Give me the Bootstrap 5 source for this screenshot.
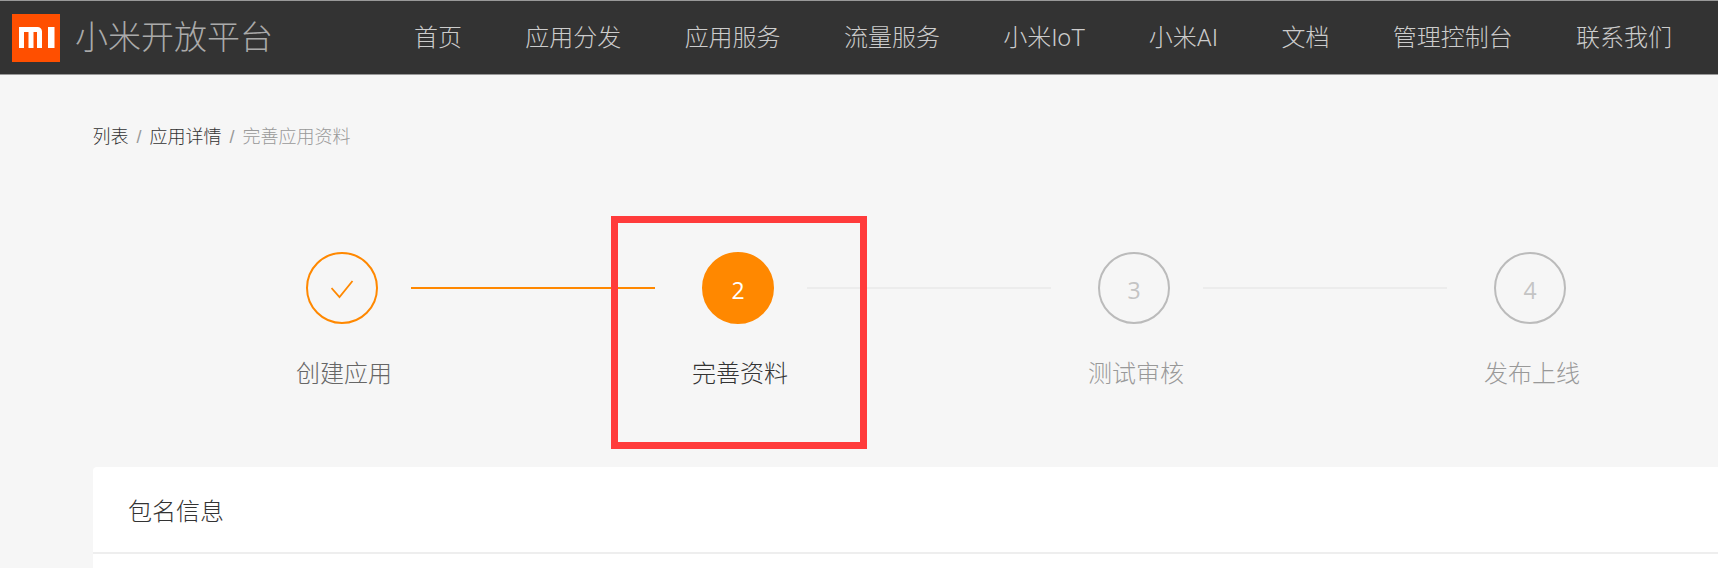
<!DOCTYPE html>
<html lang="zh-CN">
<head>
<meta charset="utf-8">
<title>小米开放平台</title>
<link rel="stylesheet" href="https://cdn.jsdelivr.net/npm/bootstrap@5.3.0/dist/css/bootstrap.min.css">
<style>
html,body{height:568px;overflow:hidden}
body{background:#f6f6f6;font-family:"Liberation Sans","Noto Sans CJK SC",sans-serif;font-weight:300;color:#333}
.mi-top{height:75px;background:#333;border-top:1px solid #999;border-bottom:1px solid #999;padding:0 46px 0 12px}
.mi-logo{width:48px;height:48px;background:#ff4f00;flex:none}
.mi-logo svg{margin-left:2px}
.mi-brand{font-size:33px;color:#aaa;margin-left:15px;line-height:1;white-space:nowrap}
.mi-links{gap:63.3px;font-size:24px;font-family:Roboto,"Noto Sans CJK SC",sans-serif}
.mi-links a{color:#ccc;text-decoration:none;white-space:nowrap}
.mi-crumb{padding:50px 0 0 92.5px;font-size:18px;line-height:24px;height:123px}
.mi-crumb a{color:#333;text-decoration:none}
.mi-crumb .sep{color:#999;margin:0 8px}
.mi-crumb .cur{color:#999}
.mi-steps{margin-left:243px;height:269px;padding-top:1px}
.mi-step{width:198px;flex:none;text-align:center}
.mi-dot{width:72px;height:72px;border-radius:50%;border:2px solid #bbb;color:#c4c4c4;font-family:"Open Sans",sans-serif;font-weight:400;font-size:23px;line-height:1;padding-top:4px;margin:53px auto 0}
.mi-step.done .mi-dot{border-color:#ff8800;color:#ff8800;padding-top:0}
.mi-step.now .mi-dot{border-color:#ff8800;background:#ff8800;color:#fff}
.mi-name{font-size:24px;line-height:34px;margin-top:33px;padding-left:4px;color:#999;white-space:nowrap}
.mi-step.done .mi-name{color:#666}
.mi-step.now .mi-name{color:#333}
.mi-line{width:244px;height:2px;background:#ececec;flex:none;margin:88px -16px 0 -30px}
.mi-line.on{background:#ff8800}
.mi-hl{position:absolute;left:611px;top:216px;width:256px;height:233px;border:7px solid #ff3b3b;pointer-events:none;z-index:5}
.mi-panel{margin-left:93px;background:#fff;border-radius:4px 0 0 0;height:120px}
.mi-panel-head{height:87px;padding:4px 0 0 35px;font-size:24px;border-bottom:2px solid #eee;color:#333}
</style>
</head>
<body>
<header class="mi-top d-flex align-items-center justify-content-between">
  <div class="d-flex align-items-center">
    <div class="mi-logo d-flex align-items-center justify-content-center">
      <svg width="36" height="21" viewBox="0 0 36 21"><path fill="#fff" d="M0 0h18.500a4.500 4.500 0 0 1 4.500 4.500V21h-5V5h-3.500v16h-5V5H5v16H0z"/><rect fill="#fff" x="29" y="0" width="6.500" height="21"/></svg>
    </div>
    <div class="mi-brand">小米开放平台</div>
  </div>
  <nav class="mi-links d-flex align-items-center">
    <a href="#">首页</a><a href="#">应用分发</a><a href="#">应用服务</a><a href="#">流量服务</a><a href="#">小米IoT</a><a href="#">小米AI</a><a href="#">文档</a><a href="#">管理控制台</a><a href="#">联系我们</a>
  </nav>
</header>
<div class="mi-crumb"><a href="#">列表</a><span class="sep">/</span><a href="#">应用详情</a><span class="sep">/</span><span class="cur">完善应用资料</span></div>
<div class="mi-steps d-flex align-items-start">
  <div class="mi-step done"><div class="mi-dot d-flex align-items-center justify-content-center"><svg width="23" height="22" viewBox="0 0 23 22"><path d="M.5 11l8 9 13-16" fill="none" stroke="#ff8800" stroke-width="1.8"/></svg></div><div class="mi-name">创建应用</div></div>
  <div class="mi-line on"></div>
  <div class="mi-step now"><div class="mi-dot d-flex align-items-center justify-content-center">2</div><div class="mi-name">完善资料</div></div>
  <div class="mi-line"></div>
  <div class="mi-step"><div class="mi-dot d-flex align-items-center justify-content-center">3</div><div class="mi-name">测试审核</div></div>
  <div class="mi-line"></div>
  <div class="mi-step"><div class="mi-dot d-flex align-items-center justify-content-center">4</div><div class="mi-name">发布上线</div></div>
</div>
<div class="mi-panel"><div class="mi-panel-head d-flex align-items-center">包名信息</div></div>
<div class="mi-hl"></div>
</body>
</html>
